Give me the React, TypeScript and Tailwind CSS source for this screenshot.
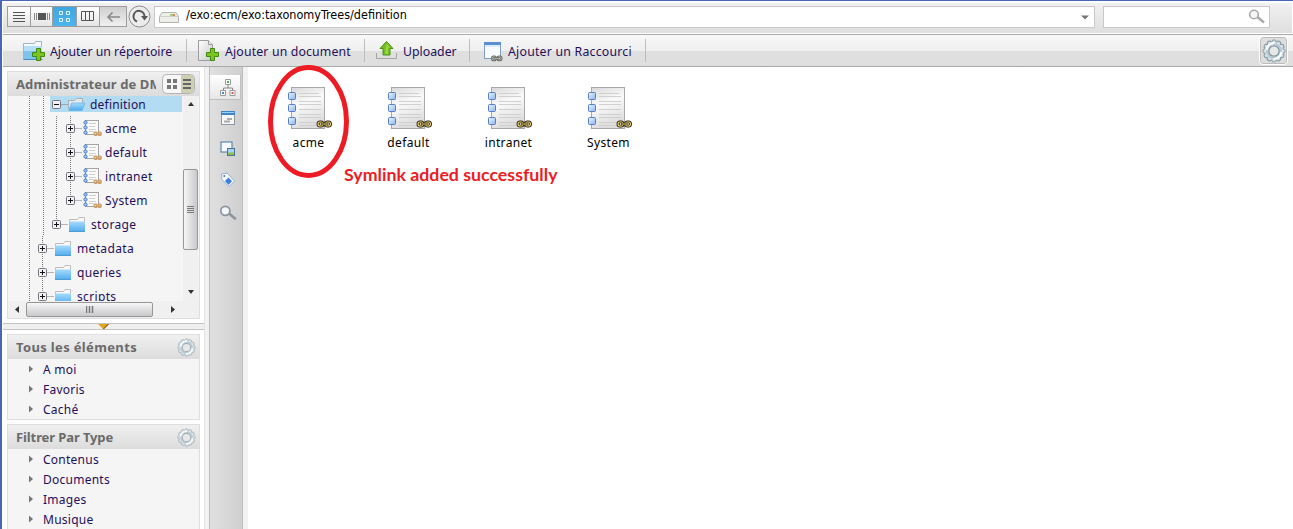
import React from "react";

const teeth = Array.from({ length: 12 }, (_, i) => i * 30);

const Gear = ({ size, fill = "#a3b1ba" }: { size: number; fill?: string }) => (
  <svg width={size} height={size} viewBox="0 0 24 24" className="shrink-0">
    <g fill="#d5e0e6" stroke={fill} strokeWidth="1">
      {teeth.map((a) => (
        <rect key={a} x="10" y="1" width="4" height="5" rx="1.500" transform={`rotate(${a} 12 12)`} />
      ))}
    </g>
    <circle cx="12" cy="12" r="9" fill="#dde6eb" />
    <circle cx="12" cy="12" r="7" fill="none" stroke="#b9c9d1" strokeWidth="2" />
    <path d="M4.500 11a8 8 0 0 1 8-7M19.500 13a8 8 0 0 1-8 7" fill="none" stroke="#fafcfd" strokeWidth="2.200" />
    <circle cx="12" cy="12" r="5.200" fill="#e8e8e8" stroke={fill} strokeWidth="1.300" />
  </svg>
);

const Magnifier = ({ w, color }: { w: number; color: string }) => (
  <svg width={w} height={w} viewBox="0 0 18 18">
    <circle cx="6" cy="6.500" r="4.300" fill="#f4f6f8" stroke={color} strokeWidth="1.600" />
    <path d="M9.500 9 16 14.500" stroke={color} strokeWidth="2.400" />
  </svg>
);

const Plus = () => (
  <path d="M14.500 9.500h4v4h4v4h-4v4h-4v-4h-4v-4h4z" fill="#7cc520" stroke="#3f8a12" strokeWidth="1" />
);

const AddFolder = () => (
  <svg width="24" height="24" viewBox="0 0 24 24">
    <path d="M1.500 20.500v-16h11l1-2h6v18z" fill="#f5f7f9" stroke="#9db6c8" />
    <path d="M2 7h18v13H2z" fill="#7cc3ee" />
    <path d="M2 7h18v5H2z" fill="#b5def7" />
    <path d="M1.500 20.500h19" stroke="#3f8dc4" />
    <Plus />
  </svg>
);

const AddDocument = () => (
  <svg width="24" height="24" viewBox="0 0 24 24">
    <defs>
      <linearGradient id="page" x1="0" y1="0" x2="1" y2="1">
        <stop offset="0" stopColor="#ffffff" />
        <stop offset="1" stopColor="#c8c8c8" />
      </linearGradient>
    </defs>
    <path d="M2.500 1.500h10l4 4v16h-14z" fill="url(#page)" stroke="#9c9c9c" />
    <path d="M12.500 1.500v4h4" fill="#eee" stroke="#9c9c9c" />
    <Plus />
  </svg>
);

const UploadIcon = () => (
  <svg width="22" height="20" viewBox="0 0 22 20">
    <path d="M.5 12v5.500h20V12" fill="none" stroke="#a5a5a5" />
    <path d="M10.500.5 17 7.500h-3v6.500H7V7.500H4z" fill="#74bd22" stroke="#4b9313" />
    <path d="M10.500 2.500 14 6.500h-2V13H9" fill="#98d64a" />
  </svg>
);

const ChainShapes = ({ color, core, mid = "#ffffff" }: { color: string; core: string; mid?: string }) => (
  <g fill="none">
    <rect x="1.500" y="1" width="5" height="4" rx="2" stroke={color} strokeWidth="3" />
    <rect x="9" y="1" width="5" height="4" rx="2" stroke={color} strokeWidth="3" />
    <rect x="1.500" y="1" width="5" height="4" rx="2" stroke={core} strokeWidth="1.100" />
    <rect x="9" y="1" width="5" height="4" rx="2" stroke={core} strokeWidth="1.100" />
    <path d="M3.500 3h1.500M10.500 3h1.500" stroke={mid} strokeWidth="1.200" />
    <path d="M4.500 3h6.500" stroke={color} strokeWidth="2.600" />
    <path d="M5 3h5.500" stroke={core} strokeWidth="1" />
  </g>
);

const ShortcutIcon = () => (
  <svg width="20" height="22" viewBox="0 0 20 22">
    <rect x="1.500" y="2.500" width="16" height="16" fill="#f7fbff" stroke="#7e9fc5" />
    <path d="M1 2h17v3H1z" fill="#5b8dd0" />
    <path d="M2 5h15v2H2z" fill="#dcebfa" />
    <g transform="translate(8 16) scale(.74 .8)">
      <ChainShapes color="#5e625c" core="#c9ccc4" />
    </g>
  </svg>
);

const NodeIcon = () => (
  <svg width="46" height="44" viewBox="0 0 46 44" className="overflow-visible">
    <defs>
      <linearGradient id="sheet" x1="0" y1="0" x2="0.3" y2="1">
        <stop offset="0" stopColor="#d9d9d9" />
        <stop offset="0.45" stopColor="#fafafa" />
        <stop offset="1" stopColor="#dddddd" />
      </linearGradient>
      <linearGradient id="tab" x1="0" y1="0" x2="1" y2="1">
        <stop offset="0" stopColor="#eef6ff" />
        <stop offset="1" stopColor="#8db4ea" />
      </linearGradient>
    </defs>
    <rect x="4.500" y=".5" width="33" height="41" fill="url(#sheet)" stroke="#a9a9a9" />
    <path d="M12 6.500h20M12 9.500h22M12 14.500h22M12 17.500h22M12 22.500h22M12 27.500h22M12 30.500h22M12 35.500h19M12 38.500h18" stroke="#d0d0d0" />
    {[5.5, 17.5, 30.5].map((y) => (
      <rect key={y} x="1.500" y={y} width="7" height="7" rx="1" fill="url(#tab)" stroke="#557fc2" />
    ))}
    <g transform="translate(29.500 34)">
      <ChainShapes color="#2c2817" core="#f5da70" />
    </g>
  </svg>
);

const SmallNode = () => (
  <svg width="20" height="18" viewBox="0 0 20 18" className="shrink-0">
    <rect x="3.500" y="1.500" width="13" height="14" fill="#fafafa" stroke="#a4a4a4" />
    <path d="M7 4.500h7M7 7.500h6M7 10.500h7M7 12.500h5" stroke="#cfcfcf" />
    <g fill="#a9ccfa" stroke="#3e74c8">
      <circle cx="3.500" cy="3.500" r="1.600" />
      <circle cx="3.500" cy="8.500" r="1.600" />
      <circle cx="3.500" cy="13.500" r="1.600" />
    </g>
    <g transform="translate(11.500 12.700) scale(.54 .65)">
      <ChainShapes color="#b8864e" core="#f5d3a0" />
    </g>
  </svg>
);

const Folder = ({ open }: { open?: boolean }) => (
  <svg width="18" height="17" viewBox="0 0 18 17" className="shrink-0">
    <defs>
      <linearGradient id="blue" x1="0" y1="0" x2="0" y2="1">
        <stop offset="0" stopColor="#a5dafc" />
        <stop offset="1" stopColor="#4eaaf0" />
      </linearGradient>
    </defs>
    {open ? (
      <>
        <path d="M.5 13V4.500h6l2-2h6V13z" fill="#e5e8ea" stroke="#a8b0b5" />
        <path d="M1 14.500 3.500 7H17l-3 7.500z" fill="url(#blue)" stroke="#64b1e4" strokeWidth=".7" />
      </>
    ) : (
      <>
        <path d="M1.500 15V3.500h8l1.500-2h5.500V15z" fill="#f7f7f7" stroke="#bcbcbc" />
        <path d="M1 5.500h16V16H1z" fill="url(#blue)" />
        <path d="M1 15.500h16" stroke="#4f9bd0" />
      </>
    )}
  </svg>
);

type Node = { label: string; box: number; lines: number[]; kind: "open" | "folder" | "node" };
const tree: Node[] = [
  { label: "definition", box: 49, lines: [22, 36], kind: "open" },
  { label: "acme", box: 63, lines: [22, 36, 49, 63], kind: "node" },
  { label: "default", box: 63, lines: [22, 36, 49, 63], kind: "node" },
  { label: "intranet", box: 63, lines: [22, 36, 49, 63], kind: "node" },
  { label: "System", box: 63, lines: [22, 36, 49], kind: "node" },
  { label: "storage", box: 49, lines: [22, 36], kind: "folder" },
  { label: "metadata", box: 35, lines: [22, 35], kind: "folder" },
  { label: "queries", box: 35, lines: [22, 35], kind: "folder" },
  { label: "scripts", box: 35, lines: [22, 35], kind: "folder" },
];

const TreeRow = ({ n }: { n: Node }) => {
  const b = n.box - 0.5;
  return (
    <div className="flex h-6 shrink-0 items-center">
      <svg width={n.box + 11} height="24" className="shrink-0">
        {n.kind === "open" && <rect x="42" y="4" width="30" height="16" fill="#b3dcf3" />}
        <g stroke="#777" strokeDasharray="1 1">
          {n.lines.map((x) => (
            <path key={x} d={`M${x - 0.5} 0V24`} />
          ))}
          {n.label === "System" && <path d="M62.500 0V12" />}
          {n.label === "storage" && <path d="M48.500 0V12" />}
          <path d={`M${b + 5} 12.500h7`} />
        </g>
        <rect x={b - 4} y="8.500" width="8" height="8" rx="1" fill="#f2f2f6" stroke="#74747f" />
        <path d={`M${b - 2.5} 12.500h5` + (n.kind === "open" ? "" : `M${b} 10v5`)} stroke="#111" />
      </svg>
      <div
        className={
          n.kind === "open"
            ? "mr-px flex h-4 flex-1 items-center gap-[4px] bg-[#b3dcf3]"
            : n.kind === "node"
              ? "flex items-center gap-[3px]"
              : "flex items-center gap-[5px]"
        }
      >
        {n.kind === "node" ? <SmallNode /> : <Folder open={n.kind === "open"} />}
        <span className={n.kind === "open" ? "pt-[2px] tracking-[0.2px]" : "pt-[2px] tracking-[0.35px]"}>{n.label}</span>
      </div>
    </div>
  );
};

const Arrow = ({ d, fill = "#333" }: { d: string; fill?: string }) => (
  <svg width="8" height="8" viewBox="0 0 8 8" className="shrink-0">
    <path d={d} fill={fill} />
  </svg>
);

const FilterPanel = ({ title, items, tight }: { title: string; items: string[]; tight?: boolean }) => (
  <section className="shrink-0 border border-[#dedede] bg-[#f5f5f5]">
    <header className="flex h-6 items-center justify-between bg-linear-to-b from-[#f0f0f0] to-[#dcdcdc] pr-[3px] pl-[8px]">
      <h2 className={`pb-px text-[13px] font-bold text-[#6a6a6a] ${tight ? "tracking-[-0.1px]" : "tracking-[0.35px]"}`}>
        {title}
      </h2>
      <Gear size={19} />
    </header>
    <ul>
      {items.map((t) => (
        <li key={t} className="flex h-5 items-center gap-[7px] pl-[20px] tracking-[0.25px]">
          <Arrow d="M1 0.500 5 4 1 7.500z" fill="#777" />
          <span className="pt-px">{t}</span>
        </li>
      ))}
    </ul>
  </section>
);

const ToolItem = ({ icon, label, className }: { icon: React.ReactNode; label: string; className: string }) => (
  <div className={`flex h-[23px] items-center border-r border-[#bdbdbd] ${className}`}>
    {icon}
    <span className="pt-[2px] whitespace-nowrap">{label}</span>
  </div>
);

export default function App() {
  return (
    <div className="flex h-[529px] w-[1293px] flex-col overflow-hidden border-t border-l-2 border-[#4868b4] bg-white font-['Noto_Sans',sans-serif] text-[12px] leading-4 text-[#1f0f5c]">
      <div className="mt-[2px] mr-px ml-px flex h-[30px] shrink-0 items-start bg-linear-to-b from-[#f1f1f1] to-[#dfdfdf] pt-[3px] pl-[4px]">
        <div className="flex h-[21px] border border-[#9d9d9d] bg-linear-to-b from-white to-[#e5e5e5]">
          <div className="flex w-[23px] items-center justify-center border-r border-[#9d9d9d]">
            <svg width="12" height="12"><path d="M0 1.500h12M0 4.500h12M0 7.500h12M0 10.500h12" stroke="#555" /></svg>
          </div>
          <div className="flex w-[22px] items-center justify-center border-r border-[#9d9d9d]">
            <svg width="16" height="9"><path d="M.5 1v7M2.500 1v7M13.500 1v7M15.500 1v7" stroke="#888" /><path d="M4 1h8v7H4z" fill="#555" /></svg>
          </div>
          <div className="flex w-[23px] items-center justify-center bg-linear-to-b from-[#3fa6e0] to-[#4bb4ee]">
            <svg width="12" height="12" fill="none" stroke="#e4f4fd"><path d="M.5.5h3v3h-3zM7.500.5h3v3h-3zM.5 7.500h3v3h-3zM7.500 7.500h3v3h-3z" /></svg>
          </div>
          <div className="flex w-[23px] items-center justify-center border-l border-[#9d9d9d]">
            <svg width="14" height="11" fill="none" stroke="#555"><path d="M.5.5h12v9H.5zM4.500.5v9M8.500.5v9" /></svg>
          </div>
          <div className="flex w-[27px] items-center justify-center border-l border-[#9d9d9d] bg-linear-to-b from-[#cfcfcf] to-[#f0f0f0]">
            <svg width="15" height="12" fill="none" stroke="#888" strokeWidth="1.600"><path d="M14 6H2M6.500 1.500 2 6l4.500 4.500" /></svg>
          </div>
        </div>
        <svg width="24" height="24" className="-mt-px ml-px">
          <circle cx="11.500" cy="11.500" r="10.500" fill="#ececec" stroke="#8d8d8d" />
          <path d="M9 16.500a5.500 5.500 0 1 1 7.500-5" fill="none" stroke="#555" strokeWidth="2" />
          <path d="M13 11h7l-3.500 4.500z" fill="#555" />
        </svg>
        <div className="ml-[2px] flex h-[22px] w-[941px] items-center border border-[#c9c9c9] bg-white pr-[5px] pl-[4px]">
          <svg width="20" height="13">
            <path d="M.5 5.500 3 1.500h14l2.500 4v6H.5z" fill="#eeeeea" stroke="#b3b3af" />
            <path d="M1 5.500h18" stroke="#cfcfcb" />
            <path d="M11 4h3" stroke="#8cc152" strokeWidth="1.500" />
            <path d="M14 4h2" stroke="#e05530" strokeWidth="1.500" />
          </svg>
          <span className="-mt-[4px] ml-[7px] flex-1 font-['DejaVu_Sans_Condensed','DejaVu_Sans',sans-serif] text-[12.500px] text-black">
            /exo:ecm/exo:taxonomyTrees/definition
          </span>
          <Arrow d="M0 2.500h8L4 6.500z" fill="#777" />
        </div>
        <div className="ml-[8px] flex h-[22px] w-[167px] items-center justify-end border border-[#c9c9c9] bg-white pr-[3px]">
          <Magnifier w={18} color="#a9a9a9" />
        </div>
      </div>

      <div className="mt-px ml-px flex h-[33px] shrink-0 items-center border-y border-[#ababab] bg-linear-to-b from-[#f8f8f8] from-0% via-[#efefef] via-52% to-[#dfdfdf] to-52% text-[12.300px]">
        <ToolItem icon={<AddFolder />} label="Ajouter un répertoire" className="w-[184px] gap-[4px] pl-[19px]" />
        <ToolItem icon={<AddDocument />} label="Ajouter un document" className="w-[178px] gap-[5px] pl-[9px] tracking-[0.15px]" />
        <ToolItem icon={<UploadIcon />} label="Uploader" className="w-[105px] gap-[5px] pl-[11px]" />
        <ToolItem icon={<ShortcutIcon />} label="Ajouter un Raccourci" className="w-[176px] gap-[5px] pl-[13px] tracking-[0.22px]" />
        <div className="flex-1" />
        <div className="mr-[6px] flex h-[27px] w-[27px] items-center justify-center rounded-[3px] border border-[#bdbdbd] bg-[#dedede] outline outline-white">
          <Gear size={24} fill="#7f95a0" />
        </div>
      </div>

      <div className="flex min-h-0 flex-1">
        <aside className="flex w-[203px] shrink-0 flex-col overflow-hidden border-r border-[#e3e3e3] pt-[4px]">
          <section className="mr-[4px] ml-[5px] flex h-[248px] shrink-0 flex-col border border-[#dedede] bg-[#f5f5f5]">
            <header className="flex h-[24px] shrink-0 items-center justify-between bg-linear-to-b from-[#f0f0f0] to-[#dcdcdc] pr-[3px] pl-[8px]">
              <h2 className="w-[140px] overflow-hidden text-[13px] font-bold tracking-[0.1px] whitespace-nowrap text-[#6a6a6a]">
                Administrateur de DM
              </h2>
              <svg width="34" height="21" className="shrink-0">
                <rect x=".5" y=".5" width="32" height="19" rx="4" fill="#f6f6f6" stroke="#b4b4b4" />
                <path d="M19 1h10q3 0 3 3v12q0 3-3 3H19z" fill="#cfcfb2" />
                <path d="M5 5h4v4H5zM11 5h4v4h-4zM5 11h4v4H5zM11 11h4v4h-4z" fill="#777" />
                <path d="M21 6h8M21 10h8M21 14h8" stroke="#666" strokeWidth="2" />
              </svg>
            </header>
            <div className="flex h-[205px] shrink-0">
              <div className="flex w-[175px] flex-col overflow-hidden">
                <div className="-mt-[4px] flex flex-col">
                  {tree.map((n) => (
                    <TreeRow key={n.label} n={n} />
                  ))}
                </div>
              </div>
              <div className="flex w-[15px] flex-col items-center bg-[#f0f0f0]">
                <div className="flex h-[73px] pt-[4px]"><Arrow d="M1 6h6L4 2z" /></div>
                <div className="flex h-[81px] w-[15px] shrink-0 items-center justify-center rounded-[2px] border border-[#979797] bg-linear-to-r from-[#f6f6f6] to-[#c9c9cd]">
                  <svg width="8" height="9"><path d="M0 1.500h7M0 3.500h7M0 5.500h7M0 7.500h7" stroke="#777" /></svg>
                </div>
                <div className="flex flex-1 pt-[38px]"><Arrow d="M1 2h6L4 6z" /></div>
              </div>
            </div>
            <div className="flex h-[17px] items-center bg-[#f0f0f0]">
              <div className="flex w-[18px] justify-center"><Arrow d="M6 0v7L2 3.500z" /></div>
              <div className="flex h-[15px] w-[127px] items-center justify-center rounded-[2px] border border-[#979797] bg-linear-to-b from-[#f6f6f6] to-[#c9c9cd]">
                <svg width="8" height="8"><path d="M.5 0v7M3.500 0v7M6.500 0v7" stroke="#777" strokeWidth="1.500" /></svg>
              </div>
              <div className="flex flex-1 pl-[16px]"><Arrow d="M2 0v7l4-3.500z" /></div>
            </div>
          </section>
          <div className="mt-[4px] ml-px flex h-[7px] shrink-0 justify-center border-y border-[#c4c4c4] bg-[#f0f0f0]">
            <svg width="11" height="6"><path d="M0 0h11L5.500 5.500z" fill="#e3a51b" /><path d="M10.500 0 5.500 5" stroke="#59421a" /></svg>
          </div>
          <div className="mt-[4px] mr-[4px] ml-[5px] flex flex-col gap-[4px]">
            <FilterPanel title="Tous les éléments" items={["A moi", "Favoris", "Caché"]} />
            <FilterPanel title="Filtrer Par Type" items={["Contenus", "Documents", "Images", "Musique"]} tight />
          </div>
        </aside>

        <nav className="flex w-[43px] shrink-0 bg-[#f2f2f2] pr-[5px] pl-[4px]">
          <div className="flex w-full flex-col items-center border-x border-[#bdbdbd] bg-linear-to-r from-[#e0e0e0] to-[#cfcfcf]">
            <div className="mt-[8px] mr-[2px] flex h-[25px] w-[31px] items-center justify-center border-r border-b border-[#c0c0c0] bg-linear-to-b from-white to-[#e6e6e6] pl-[7px]">
              <svg width="16" height="17" fill="#fff">
                <path d="M8 5v4M3.500 12V9h9v3" fill="none" stroke="#888" />
                <path d="M5.500.5h5v5h-5zM.5 11.500h5v5h-5zM10 11.500h5v5h-5z" stroke="#9a9a9a" />
                <path d="M7 2h2v2H7z" fill="#4caf50" />
                <path d="M2 13h2v2H2z" fill="#3e82d8" />
                <path d="M11.500 13h2v2h-2z" fill="#e0573a" />
              </svg>
            </div>
            <div className="mt-[11px] ml-[4px] flex flex-col items-center">
              <svg width="15" height="15">
                <rect x=".5" y=".5" width="13" height="13" fill="#f6f6f6" stroke="#8e9aa6" />
                <path d="M0 0h14v4H0z" fill="#3f86c8" /><path d="M1 1.500h12" stroke="#9ed0f3" />
                <path d="M3 10.500h6M6 8h5" stroke="#aaa" strokeWidth="1.800" />
              </svg>
              <svg width="16" height="16" className="mt-[15px]">
                <rect x="1" y="1" width="11" height="10" fill="#f3f9fe" stroke="#5e89b2" strokeWidth="1.200" />
                <rect x="7.500" y="7.500" width="7" height="7" fill="#a9d2f2" stroke="#4b7397" />
                <path d="M8 11.500h6v2.500H8z" fill="#8fc04a" />
              </svg>
              <svg width="16" height="16" className="mt-[15px]">
                <path d="M1.500 2 7 1l7.500 8-5.500 5.500L2 7.500z" fill="#f7fbff" stroke="#8fb1d3" />
                <path d="m8.500 5.500 3.500 3.800-3.500 3.500L5 9z" fill="#3b7ddd" />
                <circle cx="4.300" cy="4" r="1" fill="#52779c" />
              </svg>
              <div className="mt-[16px]"><Magnifier w={19} color="#8c959d" /></div>
            </div>
          </div>
        </nav>

        <main className="relative flex-1 bg-white">
          <ul className="flex pt-[20px] pl-[10px] text-black">
            {["acme", "default", "intranet", "System"].map((t) => (
              <li key={t} className="flex w-[100px] flex-col items-center">
                <div className="pl-[4px]"><NodeIcon /></div>
                <span className="mt-[4px] pl-px tracking-[0.350px]">{t}</span>
              </li>
            ))}
          </ul>
          <p className="mt-[11px] ml-[96px] font-['Lato',sans-serif] text-[17.750px] leading-6 font-bold whitespace-nowrap text-[#ed1c24]">
            Symlink added successfully
          </p>
          <svg width="84" height="118" className="absolute -top-[4px] left-[19px] overflow-visible">
            <ellipse cx="41.500" cy="58.500" rx="38" ry="54" fill="none" stroke="#ed1c24" strokeWidth="5" />
          </svg>
        </main>
      </div>
    </div>
  );
}
